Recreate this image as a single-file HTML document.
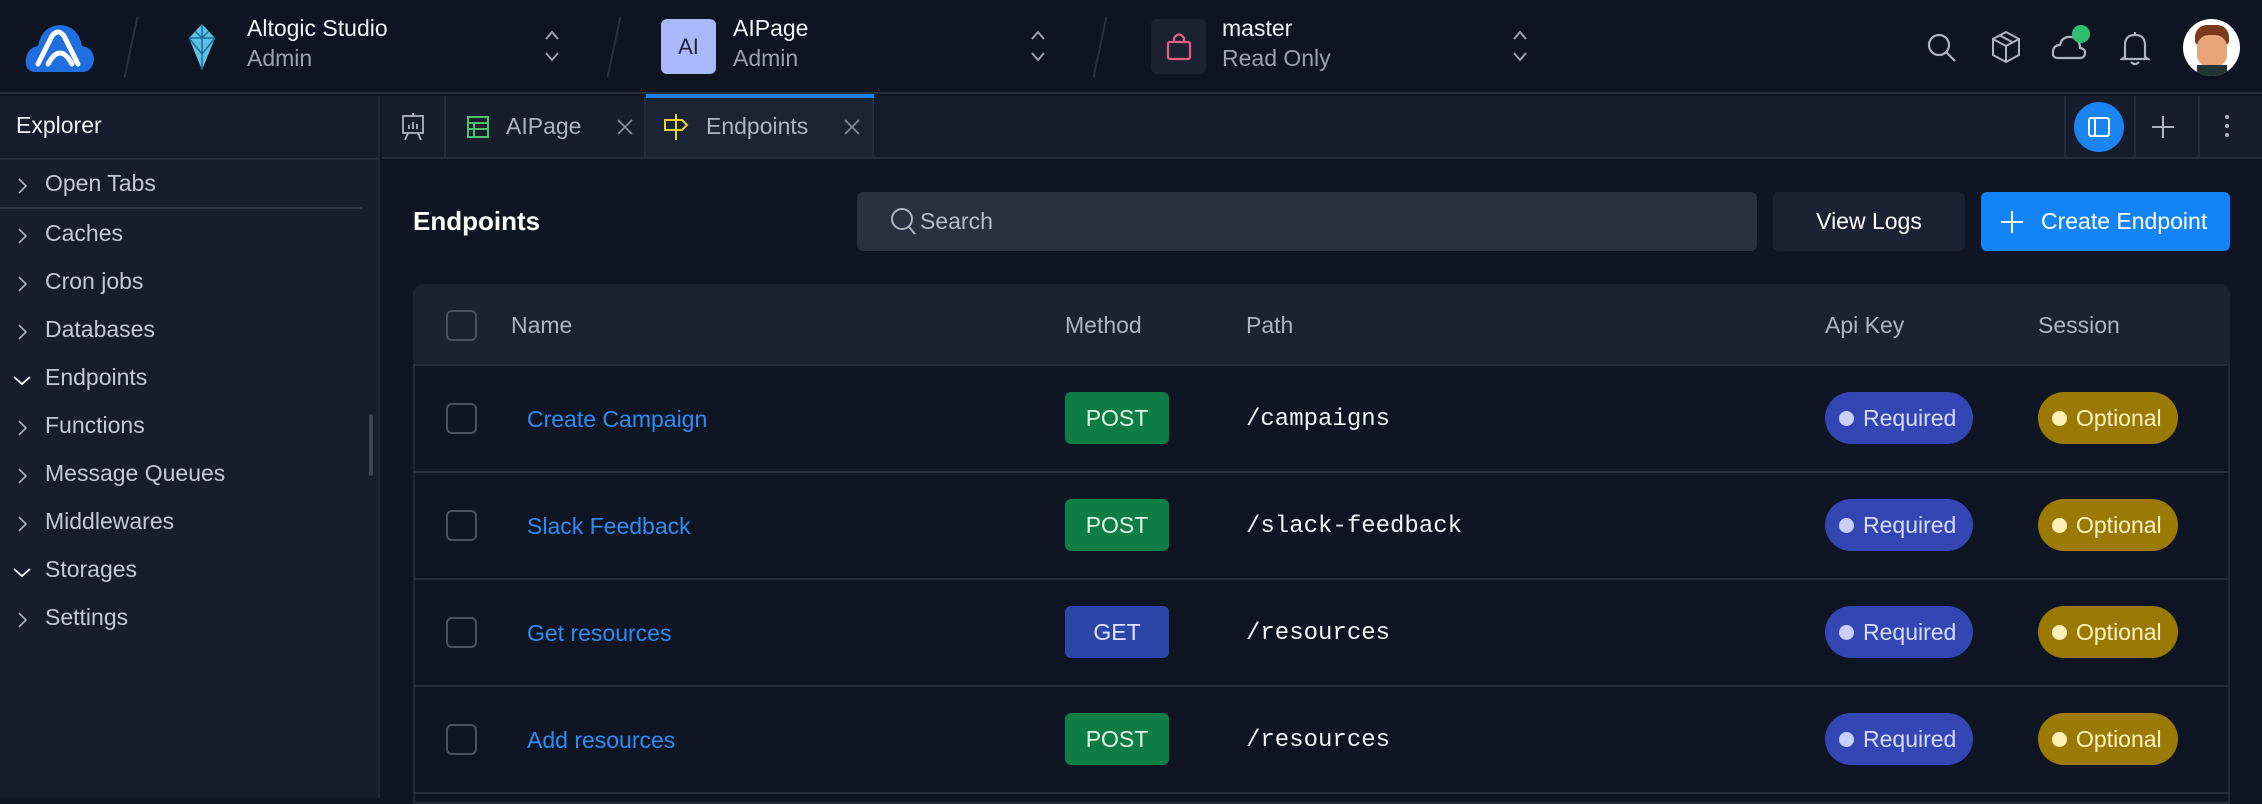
<!DOCTYPE html>
<html><head><meta charset="utf-8"><style>
*{box-sizing:border-box;margin:0;padding:0}
body{width:2262px;height:798px;overflow:hidden;background:#0f1522;font-family:"Liberation Sans",sans-serif;color:#e6e9ef;position:relative}
.abs{position:absolute}
.hdr{left:0;top:0;width:2262px;height:94px;background:#0f1422;border-bottom:2px solid #262d3b}
.slash{width:2px;height:62px;background:#2a3140;transform:rotate(12deg);top:16px}
.t1{font-size:23px;color:#f2f4f7}
.t2{font-size:23px;color:#9aa1ad}
.side{left:0;top:96px;width:380px;height:702px;background:#171d2c;border-right:2px solid #222938}
.item{position:absolute;left:0;font-size:23px;color:#c3c8d2}
.item svg{position:absolute;left:12px;top:4px}
.item span{position:absolute;left:45px;top:0;white-space:nowrap}
.tabs{left:382px;top:96px;width:1880px;height:63px;background:#171d2c;border-bottom:2px solid #262d3b}
.tab{position:absolute;top:0;height:61px;border-right:2px solid #262d3b}
.th{font-size:23px;color:#aeb4bf;position:absolute}
.row{position:absolute;left:413px;width:1817px;height:107px;border-bottom:2px solid #262d3b}
.cb{position:absolute;left:33px;width:31px;height:31px;border:2px solid #4a5160;border-radius:6px}
.nm{position:absolute;left:114px;font-size:23px;color:#2b8df5}
.badge{position:absolute;left:652px;width:104px;height:52px;border-radius:6px;font-size:23px;color:#dff5e7;text-align:center;line-height:52px}
.path{position:absolute;left:833px;font-family:"Liberation Mono",monospace;font-size:24px;color:#f0f2f5}
.pill{position:absolute;height:52px;border-radius:26px;font-size:23px;line-height:52px;padding-left:38px}
.pill:before{content:"";position:absolute;left:14px;top:19px;width:15px;height:15px;border-radius:50%}
.req{left:1412px;width:148px;background:#3446b4;color:#d6dcff}
.req:before{background:#c9d0ff}
.opt{left:1625px;width:140px;background:#9a7905;color:#fff3c4}
.opt:before{background:#fff0b8}
</style></head><body>
<div class="abs hdr">
 <svg class="abs" style="left:24px;top:22px" width="72" height="52" viewBox="0 0 72 52"><path d="M10 50 Q0 48 2 36 Q4 26 14 24 Q18 4 36 3 Q54 4 58 24 Q70 26 70 38 Q68 50 58 50Z" fill="#1f6fe0"/><path d="M14 42 L28 14 Q34 6 40 14 L54 42 M24 42 Q36 20 48 42" fill="none" stroke="#fff" stroke-width="5" stroke-linecap="round"/></svg>
 <div class="abs slash" style="left:130px"></div>
 <svg class="abs" style="left:185px;top:24px" width="34" height="46" viewBox="0 0 34 46"><path d="M17 0 L30 14 L17 46 L4 14Z" fill="#5cc0e8"/><path d="M4 14 H30 M17 0 V46 M10 7 L17 14 L24 7 M4 14 L17 30 L30 14" stroke="#1d6e96" stroke-width="1.5" fill="none"/></svg>
 <div class="abs t1" style="left:247px;top:15px">Altogic Studio</div>
 <div class="abs t2" style="left:247px;top:45px">Admin</div>
 <svg class="abs" style="left:543px;top:28px" width="18" height="36" viewBox="0 0 18 36" fill="none" stroke="#9aa1ad" stroke-width="2"><path d="M3 11 L9 4 L15 11 M3 25 L9 32 L15 25"/></svg>
 <div class="abs slash" style="left:613px"></div>
 <div class="abs" style="left:661px;top:19px;width:55px;height:55px;border-radius:6px;background:#a8b8f8;color:#1c2440;font-size:22px;text-align:center;line-height:55px">AI</div>
 <div class="abs t1" style="left:733px;top:15px">AIPage</div>
 <div class="abs t2" style="left:733px;top:45px">Admin</div>
 <svg class="abs" style="left:1029px;top:28px" width="18" height="36" viewBox="0 0 18 36" fill="none" stroke="#9aa1ad" stroke-width="2"><path d="M3 11 L9 4 L15 11 M3 25 L9 32 L15 25"/></svg>
 <div class="abs slash" style="left:1099px"></div>
 <div class="abs" style="left:1151px;top:19px;width:55px;height:55px;border-radius:6px;background:#1b2231"></div>
 <svg class="abs" style="left:1166px;top:31px" width="26" height="30" viewBox="0 0 26 30"><rect x="2" y="11" width="22" height="17" rx="2" fill="none" stroke="#e0608a" stroke-width="2.2"/><path d="M8 11 V7 Q13 0 18 7 V11" fill="none" stroke="#e0608a" stroke-width="2.2"/></svg>
 <div class="abs t1" style="left:1222px;top:15px">master</div>
 <div class="abs t2" style="left:1222px;top:45px">Read Only</div>
 <svg class="abs" style="left:1511px;top:28px" width="18" height="36" viewBox="0 0 18 36" fill="none" stroke="#9aa1ad" stroke-width="2"><path d="M3 11 L9 4 L15 11 M3 25 L9 32 L15 25"/></svg>
 <svg class="abs" style="left:1926px;top:32px" width="32" height="32" viewBox="0 0 32 32" fill="none" stroke="#aeb4bf" stroke-width="2.2"><circle cx="13" cy="13" r="10"/><path d="M20 20 L29 29"/></svg>
 <svg class="abs" style="left:1990px;top:30px" width="32" height="34" viewBox="0 0 32 34" fill="none" stroke="#aeb4bf" stroke-width="2"><path d="M16 2 L29 9 V25 L16 32 L3 25 V9Z M3 9 L16 16 L29 9 M16 16 V32 M9 5 L22 12"/></svg>
 <svg class="abs" style="left:2050px;top:22px" width="42" height="42" viewBox="0 0 42 42" fill="none" stroke="#aeb4bf" stroke-width="2.2"><path d="M8 36 Q2 36 3 29 Q4 23 10 23 Q12 14 22 15 Q30 17 30 26 Q36 27 35 32 Q34 36 30 36Z"/><circle cx="31" cy="12" r="9" fill="#2fbf71" stroke="none"/></svg>
 <svg class="abs" style="left:2120px;top:30px" width="30" height="36" viewBox="0 0 30 36" fill="none" stroke="#aeb4bf" stroke-width="2.2"><path d="M5 27 V15 Q5 5 15 5 Q25 5 25 15 V27 L28 29 H2Z M11 32 Q15 36 19 32 M15 2 V5"/></svg>
 <div class="abs" style="left:2183px;top:19px;width:57px;height:57px;border-radius:50%;background:#fff;overflow:hidden"><div style="position:absolute;left:12px;top:6px;width:34px;height:20px;border-radius:12px 12px 4px 4px;background:#7a3b1a"></div><div style="position:absolute;left:14px;top:16px;width:30px;height:32px;border-radius:12px;background:#e9a57a"></div><div style="position:absolute;left:14px;top:46px;width:30px;height:14px;background:#233;"></div></div>
</div>
<div class="abs side">
 <div class="abs" style="left:16px;top:16px;font-size:23px;color:#f2f4f7">Explorer</div>
 <div class="abs" style="left:0;top:62px;width:378px;height:2px;background:#262d3b"></div>
 <div class="abs" style="left:0;top:111px;width:362px;height:2px;background:#2b3344"></div>
 <div class="abs" style="left:369px;top:318px;width:4px;height:62px;background:#3a4254;border-radius:2px"></div>
</div>
<div class="item" style="top:170px"><svg width="20" height="24" viewBox="0 0 20 24"><path d="M7 5 L14 12 L7 19" fill="none" stroke="#aeb4bf" stroke-width="1.6"/></svg><span>Open Tabs</span></div>
<div class="item" style="top:220px"><svg width="20" height="24" viewBox="0 0 20 24"><path d="M7 5 L14 12 L7 19" fill="none" stroke="#aeb4bf" stroke-width="1.6"/></svg><span>Caches</span></div>
<div class="item" style="top:268px"><svg width="20" height="24" viewBox="0 0 20 24"><path d="M7 5 L14 12 L7 19" fill="none" stroke="#aeb4bf" stroke-width="1.6"/></svg><span>Cron jobs</span></div>
<div class="item" style="top:316px"><svg width="20" height="24" viewBox="0 0 20 24"><path d="M7 5 L14 12 L7 19" fill="none" stroke="#aeb4bf" stroke-width="1.6"/></svg><span>Databases</span></div>
<div class="item" style="top:364px"><svg width="20" height="24" viewBox="0 0 20 24"><path d="M2 9 L10 16 L18 9" fill="none" stroke="#fff" stroke-width="1.8"/></svg><span>Endpoints</span></div>
<div class="item" style="top:412px"><svg width="20" height="24" viewBox="0 0 20 24"><path d="M7 5 L14 12 L7 19" fill="none" stroke="#aeb4bf" stroke-width="1.6"/></svg><span>Functions</span></div>
<div class="item" style="top:460px"><svg width="20" height="24" viewBox="0 0 20 24"><path d="M7 5 L14 12 L7 19" fill="none" stroke="#aeb4bf" stroke-width="1.6"/></svg><span>Message Queues</span></div>
<div class="item" style="top:508px"><svg width="20" height="24" viewBox="0 0 20 24"><path d="M7 5 L14 12 L7 19" fill="none" stroke="#aeb4bf" stroke-width="1.6"/></svg><span>Middlewares</span></div>
<div class="item" style="top:556px"><svg width="20" height="24" viewBox="0 0 20 24"><path d="M2 9 L10 16 L18 9" fill="none" stroke="#fff" stroke-width="1.8"/></svg><span>Storages</span></div>
<div class="item" style="top:604px"><svg width="20" height="24" viewBox="0 0 20 24"><path d="M7 5 L14 12 L7 19" fill="none" stroke="#aeb4bf" stroke-width="1.6"/></svg><span>Settings</span></div>
<div class="abs tabs">
 <div class="tab" style="left:0;width:64px"><svg style="position:absolute;left:18px;top:16px" width="26" height="30" viewBox="0 0 26 30" fill="none" stroke="#aeb4bf" stroke-width="1.8"><rect x="3" y="4" width="20" height="17"/><path d="M13 1 V4 M8 21 L5 28 M18 21 L21 28 M9 17 V13 M13 17 V10 M17 17 V12"/></svg></div>
 <div class="tab" style="left:64px;width:200px"><svg style="position:absolute;left:20px;top:19px" width="24" height="24" viewBox="0 0 24 24" fill="none" stroke="#4cc26a" stroke-width="2"><rect x="2" y="2" width="20" height="20"/><path d="M2 8 H22 M2 14 H22 M8 8 V22"/></svg><div class="th" style="left:60px;top:17px">AIPage</div><svg style="position:absolute;left:170px;top:22px" width="18" height="18" viewBox="0 0 18 18" stroke="#8a909c" stroke-width="1.6"><path d="M2 2 L16 16 M16 2 L2 16"/></svg></div>
 <div class="tab" style="left:264px;width:228px;background:#1c2333"><div style="position:absolute;left:0;top:-2px;width:228px;height:4px;background:#1a84f2"></div><svg style="position:absolute;left:16px;top:16px" width="28" height="30" viewBox="0 0 28 30" fill="none" stroke="#e8d431" stroke-width="2"><path d="M14 2 V28 M3 8 H20 L25 13 L20 18 H3Z"/></svg><div class="th" style="left:60px;top:17px">Endpoints</div><svg style="position:absolute;left:197px;top:22px" width="18" height="18" viewBox="0 0 18 18" stroke="#8a909c" stroke-width="1.6"><path d="M2 2 L16 16 M16 2 L2 16"/></svg></div>
 <div class="abs" style="left:1682px;top:0;width:2px;height:61px;background:#262d3b"></div>
 <div class="abs" style="left:1692px;top:6px;width:50px;height:50px;border-radius:25px;background:#1a84f2"></div>
 <svg class="abs" style="left:1705px;top:19px" width="24" height="24" viewBox="0 0 24 24" fill="none" stroke="#fff" stroke-width="2"><rect x="2" y="3" width="20" height="18" rx="2"/><path d="M8 3 V21"/></svg>
 <div class="abs" style="left:1752px;top:0;width:2px;height:61px;background:#262d3b"></div>
 <svg class="abs" style="left:1768px;top:18px" width="26" height="26" viewBox="0 0 26 26" stroke="#aeb4bf" stroke-width="2"><path d="M13 2 V24 M2 13 H24"/></svg>
 <div class="abs" style="left:1816px;top:0;width:2px;height:61px;background:#262d3b"></div>
 <div class="abs" style="left:1843px;top:19px;width:4px;height:4px;border-radius:2px;background:#aeb4bf;box-shadow:0 9px 0 #aeb4bf,0 18px 0 #aeb4bf"></div>
</div>
<div class="abs" style="left:413px;top:206px;font-size:26px;font-weight:bold;color:#fff">Endpoints</div>
<div class="abs" style="left:857px;top:192px;width:900px;height:59px;border-radius:6px;background:#283141"></div>
<svg class="abs" style="left:890px;top:207px" width="28" height="30" viewBox="0 0 28 30" fill="none" stroke="#aeb4bf" stroke-width="2"><circle cx="12" cy="12" r="10"/><path d="M19 20 L25 27"/></svg>
<div class="abs" style="left:920px;top:208px;font-size:23px;color:#b6bcc6">Search</div>
<div class="abs" style="left:1773px;top:192px;width:192px;height:59px;border-radius:6px;background:#1b2231;font-size:23px;color:#fff;text-align:center;line-height:59px">View Logs</div>
<div class="abs" style="left:1981px;top:192px;width:249px;height:59px;border-radius:6px;background:#1284f8;font-size:23px;color:#fff;line-height:59px;padding-left:60px">Create Endpoint</div>
<svg class="abs" style="left:1999px;top:209px" width="26" height="26" viewBox="0 0 26 26" stroke="#fff" stroke-width="2"><path d="M13 2 V24 M2 13 H24"/></svg>
<div class="abs" style="left:413px;top:284px;width:1817px;height:520px;border:2px solid #222938;border-radius:10px 10px 0 0"></div>
<div class="abs" style="left:413px;top:284px;width:1817px;height:82px;background:#1b2231;border-radius:10px 10px 0 0;border-bottom:2px solid #262d3b">
 <div class="cb" style="top:26px"></div>
 <div class="th" style="left:98px;top:28px">Name</div>
 <div class="th" style="left:652px;top:28px">Method</div>
 <div class="th" style="left:833px;top:28px">Path</div>
 <div class="th" style="left:1412px;top:28px">Api Key</div>
 <div class="th" style="left:1625px;top:28px">Session</div>
</div>
<div class="row" style="top:366px"><div class="cb" style="top:37px"></div><div class="nm" style="top:40px">Create Campaign</div><div class="badge" style="top:26px;background:#0e7d45">POST</div><div class="path" style="top:40px">/campaigns</div><div class="pill req" style="top:26px">Required</div><div class="pill opt" style="top:26px">Optional</div></div>
<div class="row" style="top:473px"><div class="cb" style="top:37px"></div><div class="nm" style="top:40px">Slack Feedback</div><div class="badge" style="top:26px;background:#0e7d45">POST</div><div class="path" style="top:40px">/slack-feedback</div><div class="pill req" style="top:26px">Required</div><div class="pill opt" style="top:26px">Optional</div></div>
<div class="row" style="top:580px"><div class="cb" style="top:37px"></div><div class="nm" style="top:40px">Get resources</div><div class="badge" style="top:26px;background:#2d44a8;color:#dfe4ff">GET</div><div class="path" style="top:40px">/resources</div><div class="pill req" style="top:26px">Required</div><div class="pill opt" style="top:26px">Optional</div></div>
<div class="row" style="top:687px"><div class="cb" style="top:37px"></div><div class="nm" style="top:40px">Add resources</div><div class="badge" style="top:26px;background:#0e7d45">POST</div><div class="path" style="top:40px">/resources</div><div class="pill req" style="top:26px">Required</div><div class="pill opt" style="top:26px">Optional</div></div>
</body></html>
